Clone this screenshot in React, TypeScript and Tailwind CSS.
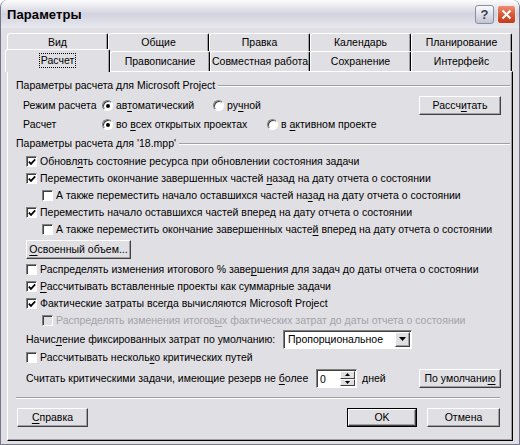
import React from "react";

function L({ t }: { t: string }) {
  const i = t.indexOf("&");
  if (i < 0) return <span>{t}</span>;
  return (
    <span>
      {t.slice(0, i)}
      <span className="underline underline-offset-[2px] decoration-[1px]">{t[i + 1]}</span>
      {t.slice(i + 2)}
    </span>
  );
}

function Cb({ checked, disabled }: { checked?: boolean; disabled?: boolean }) {
  return (
    <span
      className={`relative inline-flex shrink-0 w-[11px] h-[11px] border border-t-[#808080] border-l-[#808080] border-r-white border-b-white shadow-[inset_1px_1px_0_#404040] ${
        disabled ? "bg-[#E0DFE3]" : "bg-white"
      }`}
    >
      {checked && (
        <svg className="absolute left-[1px] top-[1px]" width="8" height="8" viewBox="0 0 8 8">
          <path d="M0.8 3.6 L3 5.9 L7.2 1.4" stroke="#000" strokeWidth="1.7" fill="none" />
        </svg>
      )}
    </span>
  );
}

function Radio({ checked }: { checked?: boolean }) {
  return (
    <span className="relative inline-flex shrink-0 w-[11px] h-[11px] rounded-full bg-white border border-t-[#808080] border-l-[#808080] border-r-white border-b-white shadow-[inset_1px_1px_0_#404040]">
      {checked && <span className="absolute left-[3px] top-[3px] w-[4px] h-[4px] rounded-full bg-black" />}
    </span>
  );
}

function Btn({ children, cls }: { children: React.ReactNode; cls?: string }) {
  return (
    <div
      className={`h-[19px] shrink-0 flex items-center justify-center whitespace-nowrap bg-[#E0DFE3] border border-t-white border-l-white border-r-[#404040] border-b-[#404040] shadow-[inset_-1px_-1px_0_#a0a0a4] ${cls ?? ""}`}
    >
      {children}
    </div>
  );
}

function Sep() {
  return <div className="flex-1 h-[2px] border-t border-t-[#a0a0a4] border-b border-b-white" />;
}

function CbRow({
  t,
  checked,
  sub,
  disabled,
}: {
  t: string;
  checked?: boolean;
  sub?: boolean;
  disabled?: boolean;
}) {
  return (
    <div className={`h-[17px] flex items-center gap-[3px] whitespace-nowrap ${sub ? "pl-[34px]" : "pl-[18px]"}`}>
      <Cb checked={checked} disabled={disabled} />
      <span className={disabled ? "text-[#a3a3a8]" : ""}>
        <L t={t} />
      </span>
    </div>
  );
}

function Tab({ t, w }: { t: string; w: string }) {
  return (
    <div
      className={`h-full flex items-center justify-center whitespace-nowrap border-t border-l border-t-white border-l-white border-r border-r-black shadow-[inset_-1px_0_0_#a0a0a4] rounded-tl-[3px] rounded-tr-[2px] ${w}`}
    >
      {t}
    </div>
  );
}

export default function App() {
  return (
    <div className="w-[520px] h-[445px] flex flex-col bg-[#E0DFE3] font-['Liberation_Sans',Arial,sans-serif] text-[10.5px] leading-none text-black overflow-hidden border-x border-b border-[#76768a] rounded-t-[7px]">
      {/* Title bar */}
      <div className="h-[28px] shrink-0 flex items-center pl-[6px] pr-[3px] bg-linear-to-b from-[#fdfdfe] via-[#d2d3de] to-[#e8e8ef] rounded-t-[6px]">
        <span className="font-bold text-[13px] tracking-[0.1px]">Параметры</span>
        <div className="ml-auto flex gap-[3px] pt-[1px]">
          <div className="w-[19px] h-[19px] rounded-[3px] border border-[#8b8da3] bg-linear-to-b from-[#fbfbfd] to-[#c3c4d3] flex items-center justify-center font-bold text-[13px] text-[#3c3e5c]">
            ?
          </div>
          <div className="w-[19px] h-[19px] rounded-[3px] border border-[#f1e6e3] bg-linear-to-b from-[#ec8f76] via-[#d9573a] to-[#c43a1d] flex items-center justify-center">
            <svg width="11" height="11" viewBox="0 0 11 11">
              <path d="M1.5 1.5 L9.5 9.5 M9.5 1.5 L1.5 9.5" stroke="#fff" strokeWidth="2" />
            </svg>
          </div>
        </div>
      </div>

      {/* Body */}
      <div className="flex-1 flex flex-col px-[6px] pt-[5px] pb-[3px]">
        {/* Tab row 1 */}
        <div className="h-[18px] flex shrink-0">
          <Tab t="Вид" w="w-[101px]" />
          <Tab t="Общие" w="w-[101px]" />
          <Tab t="Правка" w="w-[101px]" />
          <Tab t="Календарь" w="w-[101px]" />
          <Tab t="Планирование" w="w-[101px]" />
        </div>
        {/* Tab row 2 */}
        <div className="h-[20px] flex shrink-0">
          <div className="relative z-10 self-start -ml-[2px] -mt-[2px] w-[105px] h-[23px] flex items-center justify-center bg-[#E0DFE3] border-t border-l border-t-white border-l-white border-r border-r-black shadow-[inset_-1px_0_0_#a0a0a4] rounded-tl-[3px] rounded-tr-[2px]">
            <span className="border border-dotted border-black px-[1px] py-[1px] -mt-[1px]">Расчет</span>
          </div>
          <Tab t="Правописание" w="w-[100px]" />
          <Tab t="Совместная работа" w="w-[100px]" />
          <Tab t="Сохранение" w="w-[101px]" />
          <Tab t="Интерфейс" w="w-[101px]" />
        </div>

        {/* Panel */}
        <div className="flex-1 flex flex-col border-t border-l border-t-white border-l-white border-r border-b border-r-black border-b-black shadow-[inset_-1px_-1px_0_#a0a0a4] pt-[4px]">
          <div className="h-[19px] flex items-center pl-[8px] pr-[2px] whitespace-nowrap">
            <span className="mr-[3px]">Параметры расчета для Microsoft Project</span>
            <Sep />
          </div>

          <div className="h-[20px] flex items-center pl-[15px] pr-[11px] whitespace-nowrap">
            <span className="w-[79px]">Режим расчета</span>
            <span className="w-[111px] flex items-center gap-[3px]">
              <Radio checked />
              <L t="ав&томатический" />
            </span>
            <span className="flex items-center gap-[3px]">
              <Radio />
              <L t="ру&чной" />
            </span>
            <Btn cls="ml-auto w-[82px]">
              <L t="Рассч&итать" />
            </Btn>
          </div>

          <div className="h-[19px] flex items-center pl-[15px] whitespace-nowrap">
            <span className="w-[79px]">Расчет</span>
            <span className="w-[165px] flex items-center gap-[3px]">
              <Radio checked />
              <L t="во &всех открытых проектах" />
            </span>
            <span className="flex items-center gap-[3px]">
              <Radio />
              <L t="в &активном проекте" />
            </span>
          </div>

          <div className="h-[19px] flex items-center pl-[8px] pr-[2px] whitespace-nowrap">
            <span className="mr-[3px]">Параметры расчета для '18.mpp'</span>
            <Sep />
          </div>

          <CbRow checked t="Обновл&ять состояние ресурса при обновлении состояния задачи" />
          <CbRow checked t="Переместить окончание завершенных частей &назад на дату отчета о состоянии" />
          <CbRow sub t="А также переместить начало оставшихся частей на&зад на дату отчета о состоянии" />
          <CbRow checked t="Переместить начало оставшихся частей вперед на дату отчета о состоянии" />
          <CbRow sub t="А также переместить окончание завершенных часте&й вперед на дату отчета о состоянии" />

          <div className="h-[23px] flex items-center pl-[18px]">
            <Btn cls="w-[105px]">
              <L t="&Освоенный объем..." />
            </Btn>
          </div>

          <CbRow t="Распределять изменения итогового % заве&ршения для задач до даты отчета о состоянии" />
          <CbRow checked t="&Рассчитывать вставленные проекты как суммарные задачи" />
          <CbRow checked t="Фактические затраты всегда вычисляются Microsoft Project" />
          <CbRow sub disabled t="Распределять изменения итогов&ых фактических затрат до даты отчета о состоянии" />

          <div className="h-[20px] flex items-center pl-[18px] whitespace-nowrap">
            <span className="w-[257px]">
              <L t="Начис&ление фиксированных затрат по умолчанию:" />
            </span>
            <div className="w-[129px] h-[19px] flex bg-white border border-t-[#808080] border-l-[#808080] border-r-white border-b-white shadow-[inset_1px_1px_0_#404040]">
              <span className="flex-1 flex items-center pl-[4px] pt-[1px]">Пропорциональное</span>
              <div className="w-[15px] my-[1px] mr-[1px] flex items-center justify-center bg-[#E0DFE3] border border-t-white border-l-white border-r-[#404040] border-b-[#404040] shadow-[inset_-1px_-1px_0_#a0a0a4]">
                <svg width="7" height="4" viewBox="0 0 7 4">
                  <path d="M0 0 H7 L3.5 4 Z" fill="#000" />
                </svg>
              </div>
            </div>
          </div>

          <CbRow t="Рассчитывать несколь&ко критических путей" />

          <div className="h-[25px] flex items-center pl-[18px] pr-[11px] whitespace-nowrap">
            <span className="w-[290px]">
              <L t="Считать критическими задачи, имеющие резерв не &более" />
            </span>
            <div className="w-[41px] h-[19px] flex bg-white border border-t-[#808080] border-l-[#808080] border-r-white border-b-white shadow-[inset_1px_1px_0_#404040]">
              <span className="flex-1 flex items-center pl-[3px] pt-[1px]">0</span>
              <div className="w-[15px] my-[1px] mr-[1px] flex flex-col">
                <div className="flex-1 flex items-center justify-center bg-[#E0DFE3] border border-t-white border-l-white border-r-[#404040] border-b-[#404040]">
                  <svg width="5" height="3" viewBox="0 0 5 3">
                    <path d="M0 3 H5 L2.5 0 Z" fill="#000" />
                  </svg>
                </div>
                <div className="flex-1 flex items-center justify-center bg-[#E0DFE3] border border-t-white border-l-white border-r-[#404040] border-b-[#404040]">
                  <svg width="5" height="3" viewBox="0 0 5 3">
                    <path d="M0 0 H5 L2.5 3 Z" fill="#000" />
                  </svg>
                </div>
              </div>
            </div>
            <span className="ml-[5px]">дней</span>
            <Btn cls="ml-auto w-[82px]">
              <L t="По умолчани&ю" />
            </Btn>
          </div>

          <div className="mt-[6px] ml-[8px] mr-[12px] flex">
            <Sep />
          </div>

          <div className="mt-[9px] h-[19px] flex pl-[9px] pr-[12px]">
            <Btn cls="w-[71px]">
              <L t="&Справка" />
            </Btn>
            <div className="ml-auto w-[70px] h-[19px] border border-black flex">
              <div className="flex-1 flex items-center justify-center border-t border-l border-t-white border-l-white border-r border-b border-r-[#404040] border-b-[#404040] shadow-[inset_-1px_-1px_0_#a0a0a4]">
                OK
              </div>
            </div>
            <Btn cls="ml-[10px] w-[73px]">Отмена</Btn>
          </div>
        </div>
      </div>
    </div>
  );
}
